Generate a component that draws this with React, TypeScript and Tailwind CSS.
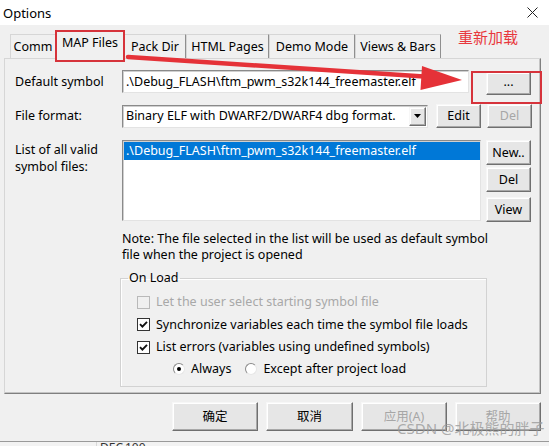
import React from 'react';

const FONT = 'font-["Noto_Sans","Noto_Sans_CJK_SC",sans-serif]';

function Btn({ children, disabled, className = '' }: { children: React.ReactNode; disabled?: boolean; className?: string }) {
  return (
    <div
      className={`flex items-center justify-center bg-[#e6e6e6] border border-t-[#f7f7f7] border-l-[#f7f7f7] border-r-[#6f6f6f] border-b-[#6f6f6f] shadow-[inset_-1px_-1px_0_#a8a8a8,inset_1px_1px_0_#ffffff] ${
        disabled ? 'text-[#a6a6a6]' : 'text-black'
      } ${className}`}
    >
      {children}
    </div>
  );
}

function Sunken({ children, className = '' }: { children?: React.ReactNode; className?: string }) {
  return (
    <div className={`bg-white border border-t-[#8a8a8a] border-l-[#8a8a8a] border-r-[#e3e3e3] border-b-[#e3e3e3] shadow-[inset_1px_1px_0_#cfcfcf] ${className}`}>
      {children}
    </div>
  );
}

function Check({ checked, disabled, label, h = 'h-[22px]' }: { checked?: boolean; disabled?: boolean; label: string; h?: string }) {
  return (
    <div className={`flex items-center ${h}`}>
      <div
        className={`flex h-[13px] w-[13px] items-center justify-center border ${
          disabled ? 'border-[#b9b9b9] bg-[#f0f0f0]' : 'border-[#333333] bg-white'
        }`}
      >
        {checked && (
          <svg width="9" height="9" viewBox="0 0 9 9">
            <path d="M1 4.2 L3.4 6.6 L8 1.8" fill="none" stroke="#111" strokeWidth="1.9" />
          </svg>
        )}
      </div>
      <span className={`ml-[6px] ${disabled ? 'text-[#a8a8a8]' : 'text-black'}`}>{label}</span>
    </div>
  );
}

function Radio({ checked, label }: { checked?: boolean; label: string }) {
  return (
    <div className="flex items-center">
      <div className="flex h-[12px] w-[12px] items-center justify-center rounded-full border border-t-[#8a8a8a] border-l-[#8a8a8a] border-r-[#e6e6e6] border-b-[#e6e6e6] bg-white">
        {checked && <div className="h-[4px] w-[4px] rounded-full bg-black" />}
      </div>
      <span className="ml-[6px]">{label}</span>
    </div>
  );
}

const tabs = [
  { name: 'Comm', w: 'w-[46px]' },
  { name: 'MAP Files', w: 'w-[68px]', active: true },
  { name: 'Pack Dir', w: 'w-[62px]' },
  { name: 'HTML Pages', w: 'w-[83px]' },
  { name: 'Demo Mode', w: 'w-[86px]' },
  { name: 'Views & Bars', w: 'w-[86px]' },
];

export default function App() {
  const path = '.\\Debug_FLASH\\ftm_pwm_s32k144_freemaster.elf';
  return (
    <div className={`relative h-[446px] w-[549px] overflow-hidden bg-[#f0f0f0] text-[12.5px] leading-[16px] text-black ${FONT}`}>
      <div className="flex h-[442px] flex-col border-b border-[#9a9a9a] bg-[#f0f0f0]">
        {/* title bar */}
        <div className="flex h-[25px] items-center justify-between bg-white pl-[3px] pr-[11px]">
          <span className="text-[13px]">Options</span>
          <svg width="11" height="11" viewBox="0 0 11 11">
            <path d="M0.5 0.5 L10.5 10.5 M10.5 0.5 L0.5 10.5" stroke="#222" strokeWidth="1" />
          </svg>
        </div>

        <div className="flex-1 pl-[4px] pr-[8px] pt-[6px]">
          {/* tabs */}
          <div className="flex h-[27px] items-end pl-[6px]">
            {tabs.map((t) =>
              t.active ? (
                <div
                  key={t.name}
                  className={`relative z-10 -mb-px flex h-[29px] items-start justify-center border border-b-0 border-l-[#d6d6d6] border-t-[#d6d6d6] border-r-[#8f8f8f] bg-[#f0f0f0] pt-[4px] ${t.w}`}
                >
                  {t.name}
                  <div className="absolute -left-[2px] -right-[2px] -top-[1px] -bottom-[3px] border-2 border-[#d6333b]" />
                </div>
              ) : (
                <div
                  key={t.name}
                  className={`flex h-[24px] items-center justify-center border border-b-0 border-l-[#d6d6d6] border-t-[#d6d6d6] border-r-[#8f8f8f] bg-[#f0f0f0] ${t.w}`}
                >
                  {t.name}
                </div>
              )
            )}
          </div>

          {/* tab panel */}
          <div className="h-[336px] border border-l-[#d6d6d6] border-t-[#d6d6d6] border-r-[#7f7f7f] border-b-[#7f7f7f] shadow-[inset_-1px_-1px_0_#c4c4c4] pl-[10px] pt-[11px]">
            {/* default symbol */}
            <div className="flex items-start">
              <div className="flex h-[23px] w-[107px] items-center">Default symbol</div>
              <Sunken className="flex h-[23px] w-[347px] items-center pl-[3px]">{path}</Sunken>
              <div className="relative ml-[17px] mt-[2px]">
                <Btn className="h-[23px] w-[45px] pb-[3px]">...</Btn>
                <div className="absolute -left-[15px] -top-[1px] -right-[11px] -bottom-[9px] border-2 border-[#d6333b]" />
              </div>
            </div>

            {/* file format */}
            <div className="mt-[9px] flex items-center">
              <div className="w-[107px]">File format:</div>
              <Sunken className="flex h-[23px] w-[306px] items-center justify-between pl-[3px] pr-[1px]">
                <span>Binary ELF with DWARF2/DWARF4 dbg format.</span>
                <Btn className="h-[19px] w-[17px]">
                  <svg width="7" height="4" viewBox="0 0 7 4">
                    <path d="M0 0 H7 L3.5 4 Z" fill="#000" />
                  </svg>
                </Btn>
              </Sunken>
              <Btn className="ml-[8px] h-[24px] w-[45px]">Edit</Btn>
              <Btn disabled className="ml-[6px] h-[24px] w-[45px]">Del</Btn>
            </div>

            {/* list */}
            <div className="mt-[12px] flex items-start">
              <div className="w-[107px] pt-[1px] leading-[17px]">
                List of all valid
                <br />
                symbol files:
              </div>
              <Sunken className="h-[81px] w-[359px] pl-px pt-px">
                <div className="flex h-[18px] items-center bg-[#0078d7] pl-[2px] text-white">{path}</div>
              </Sunken>
              <div className="ml-[5px] flex flex-col">
                <Btn className="h-[25px] w-[45px]">New..</Btn>
                <Btn className="mt-[2px] h-[25px] w-[45px]">Del</Btn>
                <Btn className="mt-[5px] h-[25px] w-[45px]">View</Btn>
              </div>
            </div>

            {/* note */}
            <div className="ml-[107px] mt-[9px] leading-[16px]">
              Note: The file selected in the list will be used as default symbol
              <br />
              file when the project is opened
            </div>

            {/* on load group */}
            <fieldset className="ml-[105px] mt-[7px] h-[117px] w-[367px] border border-[#d2d2d2] shadow-[inset_1px_1px_0_#ffffff]">
              <legend className="ml-[7px] px-[1px] leading-[16px]">On Load</legend>
              <div className="mt-[5px] pl-[16px]">
                <Check disabled label="Let the user select starting symbol file" />
                <Check checked h="h-[23px]" label="Synchronize variables each time the symbol file loads" />
                <Check checked label="List errors (variables using undefined symbols)" />
                <div className="flex h-[22px] items-center pl-[36px]">
                  <Radio checked label="Always" />
                  <div className="ml-[14px]">
                    <Radio label="Except after project load" />
                  </div>
                </div>
              </div>
            </fieldset>
          </div>

          {/* dialog buttons */}
          <div className="mt-[8px] flex justify-end gap-[8px]">
            <Btn className="h-[29px] w-[86px] border-[#3c3c3c] border-t-[#3c3c3c] border-l-[#3c3c3c]">确定</Btn>
            <Btn className="h-[29px] w-[87px]">取消</Btn>
            <Btn disabled className="h-[29px] w-[86px]">应用(A)</Btn>
            <Btn disabled className="h-[29px] w-[86px]">帮助</Btn>
          </div>
        </div>
      </div>

      {/* underlying window strip */}
      <div className="flex h-[4px] overflow-hidden bg-[#f3f3f3] text-[12px] leading-[14px] text-[#333]">
        <div className="w-[97px] border-r border-[#d8d8d8]" />
        <span className="-mt-[1px] ml-[3px] w-[22px]">DEC</span>
        <span className="-mt-[1px] ml-[3px]">100</span>
      </div>

      {/* annotations */}
      <div className="absolute left-[458px] top-[27px] text-[15px] leading-[20px] text-[#e8383d]">重新加载</div>
      <svg className="pointer-events-none absolute left-0 top-0" width="549" height="446" viewBox="0 0 549 446">
        <path d="M128 57 L424 76.5" stroke="#e53238" strokeWidth="4.5" strokeLinecap="round" />
        <path d="M462 80 L422 66 L420.5 90 Z" fill="#e53238" />
      </svg>
      <div className="absolute left-[397px] top-[419px] text-[15px] leading-[18px] text-[#9a9a9a]/80">CSDN @北极熊的胖子</div>
    </div>
  );
}
